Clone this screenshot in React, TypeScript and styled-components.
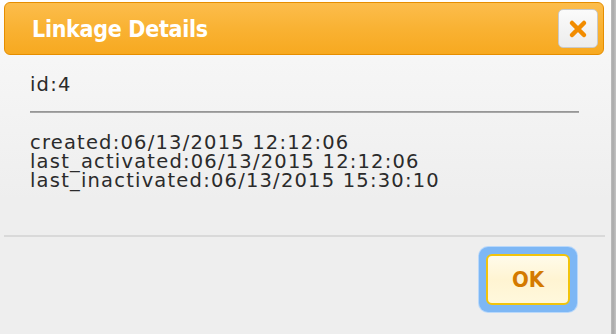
import styled, { createGlobalStyle } from 'styled-components';

const GlobalStyle = createGlobalStyle`
  html, body {
    margin: 0;
    padding: 0;
    background: #ffffff;
    overflow: hidden;
  }
  body {
    font-family: "DejaVu Sans", "Liberation Sans", sans-serif;
  }
`;

const details = [
  'created:06/13/2015 12:12:06',
  'last_activated:06/13/2015 12:12:06',
  'last_inactivated:06/13/2015 15:30:10',
];

const App = () => {
  return (
    <>
      <GlobalStyle />
      <Page>
        <Dialog>
          <TitleBar>
            <Title>Linkage Details</Title>
            <CloseButton aria-label="close">
              <svg width="20" height="20" viewBox="0 0 20 20">
                <path
                  d="M4 4 L16 16 M16 4 L4 16"
                  stroke="#f28c00"
                  strokeWidth="4.5"
                  strokeLinecap="round"
                />
              </svg>
            </CloseButton>
          </TitleBar>
          <Content>
            <IdLine>id:4</IdLine>
            <Rule />
            <DetailList>
              {details.map((item) => (
                <li key={item}>{item}</li>
              ))}
            </DetailList>
          </Content>
          <Footer>
            <FocusRing>
              <OkButton>OK</OkButton>
            </FocusRing>
          </Footer>
        </Dialog>
        <Shade />
      </Page>
    </>
  );
};

export default App;

const Page = styled.div`
  display: flex;
  width: 616px;
  height: 334px;
`;

const Dialog = styled.div`
  width: 611px;
  height: 340px;
  flex-shrink: 0;
  background: linear-gradient(#ffffff 0px, #f6f6f6 60px, #eeeeee 200px, #eeeeee);
  border-bottom-left-radius: 6px;
  display: flex;
  flex-direction: column;
`;

const Shade = styled.div`
  width: 5px;
  height: 334px;
  background: linear-gradient(to right, #bdbdbd, #a9a9a9 40%, #c4c4c4);
`;

const TitleBar = styled.div`
  margin: 2px 7px 0 4px;
  height: 51px;
  border: 1px solid #e68e00;
  border-radius: 6px;
  background: linear-gradient(#fcbd4c, #f9b233 50%, #f7a920);
  display: flex;
  align-items: center;
  justify-content: space-between;
  padding: 0 5px 0 27px;
`;

const Title = styled.span`
  color: #ffffff;
  font-family: "DejaVu Sans Condensed", "DejaVu Sans", sans-serif;
  font-weight: bold;
  font-size: 23px;
  letter-spacing: -0.3px;
`;

const CloseButton = styled.button`
  width: 40px;
  height: 39px;
  padding: 0;
  border: 1px solid #c9c9c9;
  border-radius: 5px;
  background: linear-gradient(#fbfbfb, #ececec);
  display: flex;
  align-items: center;
  justify-content: center;
`;

const Content = styled.div`
  padding: 19px 32px 0 30px;
  height: 161px;
  color: #2b2b2b;
  font-size: 19.5px;
  letter-spacing: 1.2px;
`;

const IdLine = styled.div`
  line-height: 22px;
`;

const Rule = styled.div`
  margin-top: 15px;
  height: 2px;
  background: linear-gradient(#8f8f8f, #b0b0b0);
`;

const DetailList = styled.ul`
  list-style: none;
  margin: 20px 0 0;
  padding: 0;

  li {
    line-height: 19px;
  }
`;

const Footer = styled.div`
  margin: 0 6px 0 4px;
  border-top: 2px solid #d9d9d9;
  display: flex;
  justify-content: flex-end;
  padding: 10px 28px 0 0;
`;

const FocusRing = styled.div`
  padding: 7px;
  border-radius: 9px;
  background: #7db7f5;
  box-shadow: 0 0 0 1px #b9d8fa;
`;

const OkButton = styled.button`
  width: 84px;
  height: 51px;
  border: 2px solid #f2c40c;
  border-radius: 6px;
  background: linear-gradient(#fffbea, #fff4d2 50%, #fff8dc);
  color: #d47a00;
  font-family: "DejaVu Sans Condensed", "DejaVu Sans", sans-serif;
  font-weight: bold;
  font-size: 22px;
  display: flex;
  align-items: center;
  justify-content: center;
`;
